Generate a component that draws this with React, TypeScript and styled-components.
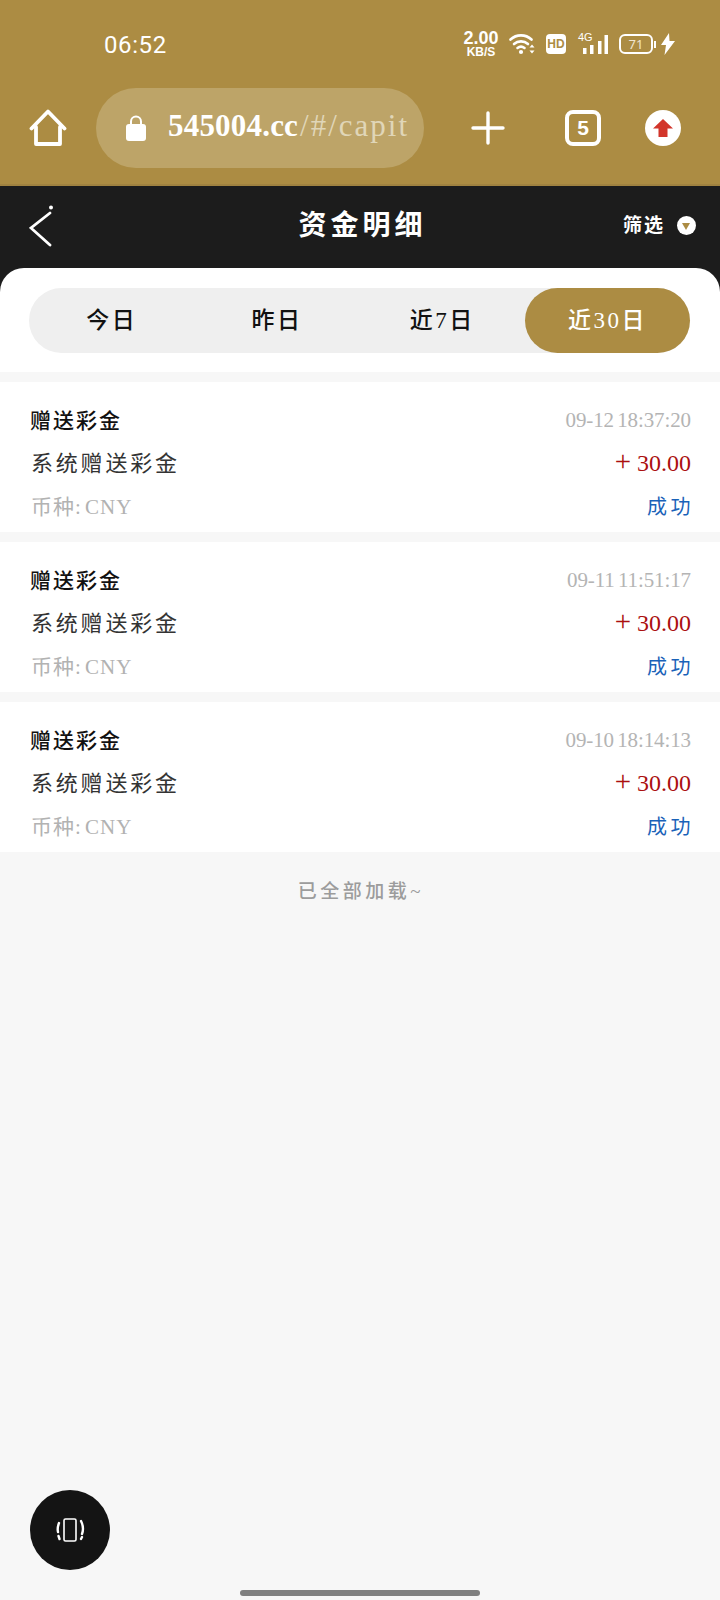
import { FC } from "react";
import styled, { createGlobalStyle } from "styled-components";

const GlobalStyle = createGlobalStyle`
  html, body {
    margin: 0;
    padding: 0;
    background: #f7f7f7;
  }
  * { box-sizing: border-box; }
`;

const serif = `"Liberation Serif", "Noto Sans CJK SC", serif`;
const gold = "#ac8c43";

interface Record {
  time: string;
}

const records: Record[] = [
  { time: "09-12 18:37:20" },
  { time: "09-11 11:51:17" },
  { time: "09-10 18:14:13" },
];

const tabs = ["今日", "昨日", "近7日", "近30日"];

const HomeIcon = () => (
  <svg width="38" height="38" viewBox="0 0 38 38" fill="none" stroke="#fff" strokeWidth="3.8" strokeLinejoin="round" strokeLinecap="round">
    <path d="M2.5 19.5 19 2.5l16.5 17" />
    <path d="M7 18v17h24V18" />
  </svg>
);

const LockIcon = () => (
  <svg width="22" height="28" viewBox="0 0 22 28" fill="none">
    <path d="M6 12V7.5a5 5 0 0 1 10 0V12" stroke="#fff" strokeWidth="2" />
    <rect x="1" y="10" width="20" height="17" rx="3" fill="#fff" />
  </svg>
);

const PlusIcon = () => (
  <svg width="34" height="34" viewBox="0 0 34 34" stroke="#fff" strokeWidth="3.4" strokeLinecap="round">
    <path d="M17 2v30M2 17h30" />
  </svg>
);

const UpdateIcon = () => (
  <svg width="36" height="36" viewBox="0 0 36 36">
    <circle cx="18" cy="18" r="18" fill="#fff" />
    <path d="M18 9 28 18.500h-5.500V27h-9v-8.500H8z" fill="#d2352b" />
  </svg>
);

const WifiIcon = () => (
  <svg width="26" height="22" viewBox="0 0 26 22" fill="none" stroke="#fff" strokeWidth="2.6" strokeLinecap="round">
    <path d="M1.500 6.500c6-5.500 15-5.500 21 0" />
    <path d="M5 11c4-3.500 10-3.500 14 0" />
    <path d="M8.500 15c2-1.500 5-1.500 7 0" />
    <circle cx="12" cy="19" r="2.100" fill="#fff" stroke="none" />
    <path d="M23 11.500l-2.500 3h5zM23 20.500l-2.500-3h5z" fill="#fff" stroke="none" />
  </svg>
);

const SignalIcon = () => (
  <svg width="28" height="20" viewBox="0 0 28 20" fill="#fff">
    <rect x="3" y="13" width="3.500" height="6" />
    <rect x="10" y="10" width="3.500" height="9" />
    <rect x="18" y="6" width="3.500" height="13" />
    <rect x="24.500" y="0" width="3.500" height="19" />
  </svg>
);

const BoltIcon = () => (
  <svg width="14" height="22" viewBox="0 0 14 22" fill="#fff">
    <path d="M8 0 0 12h5l-1.500 10L14 8H8.500z" />
  </svg>
);

const BackIcon = () => (
  <svg width="26" height="42" viewBox="0 0 26 42" fill="none" stroke="#fff" strokeWidth="2.800" strokeLinecap="round">
    <path d="M21 9 2 24l19 17" transform="translate(0 -1)" />
    <circle cx="22" cy="2.500" r="2" fill="#fff" stroke="none" />
  </svg>
);

const ShakeIcon = () => (
  <svg width="32" height="26" viewBox="0 0 32 26" fill="none" stroke="#fff" strokeWidth="1.600" strokeLinecap="round">
    <rect x="10" y="2" width="12" height="22" rx="1.500" />
    <path d="M5 6C3.500 10 3.500 13 4 15M5.500 22 4.500 19M27 4c2 4 2.500 9 1 13M27 22l1-2" strokeWidth="2.400" />
  </svg>
);

const App: FC = () => (
  <Page>
    <GlobalStyle />
    <BrowserHeader>
      <StatusBar>
        <Clock>06:52</Clock>
        <StatusIcons>
          <Speed>
            <SpeedValue>2.00</SpeedValue>
            <SpeedUnit>KB/S</SpeedUnit>
          </Speed>
          <WifiIcon />
          <HdBadge>HD</HdBadge>
          <Signal>
            <SignalLabel>4G</SignalLabel>
            <SignalIcon />
          </Signal>
          <Battery>
            <BatteryBody>71</BatteryBody>
            <BatteryCap />
            <BoltIcon />
          </Battery>
        </StatusIcons>
      </StatusBar>
      <Toolbar>
        <HomeIcon />
        <UrlPill>
          <LockIcon />
          <UrlText>
            545004.cc<UrlPath>/#/capital</UrlPath>
          </UrlText>
        </UrlPill>
        <ToolSlot $width={88}><PlusIcon /></ToolSlot>
        <ToolSlot $width={102}><TabCount>5</TabCount></ToolSlot>
        <ToolSlot $width={58}><UpdateIcon /></ToolSlot>
      </Toolbar>
    </BrowserHeader>

    <DarkSection>
      <NavBar>
        <BackSlot><BackIcon /></BackSlot>
        <NavTitle>资金明细</NavTitle>
        <FilterButton>
          <FilterLabel>筛选</FilterLabel>
          <FilterDot />
        </FilterButton>
      </NavBar>
      <TabPanel>
        <TabTrack>
          {tabs.map((tab, i) => (
            <TabItem key={tab} $active={i === 3}>{tab}</TabItem>
          ))}
        </TabTrack>
      </TabPanel>
    </DarkSection>

    <List>
      {records.map((record) => (
        <Card key={record.time}>
          <Row>
            <RecordType>赠送彩金</RecordType>
            <RecordTime>{record.time}</RecordTime>
          </Row>
          <Row>
            <RecordDesc>系统赠送彩金</RecordDesc>
            <Amount><AmountSign>+</AmountSign>30.00</Amount>
          </Row>
          <Row>
            <Currency>币种: CNY</Currency>
            <Status>成功</Status>
          </Row>
        </Card>
      ))}
    </List>
    <EndNote>已全部加载~</EndNote>

    <FloatButton><ShakeIcon /></FloatButton>
    <HomeBar />
  </Page>
);

const Page = styled.div`
  position: relative;
  width: 720px;
  height: 1600px;
  overflow: hidden;
  background: #f7f7f7;
  font-family: ${serif};
`;

const BrowserHeader = styled.header`
  height: 186px;
  background: ${gold};
  border-bottom: 2px solid #a08240;
`;

const StatusBar = styled.div`
  height: 88px;
  padding: 0 45px 0 104px;
  display: flex;
  align-items: center;
  justify-content: space-between;
  color: #fff;
`;

const Clock = styled.span`
  margin-top: 2px;
  font-family: Roboto, sans-serif;
  font-size: 24px;
  letter-spacing: 0.6px;
`;

const StatusIcons = styled.div`
  display: flex;
  align-items: center;
  gap: 11px;
`;

const Speed = styled.div`
  width: 34px;
  display: flex;
  flex-direction: column;
  align-items: center;
  font-family: "Liberation Sans", sans-serif;
  font-weight: 700;
`;

const SpeedValue = styled.span`
  font-size: 18px;
  line-height: 17px;
`;

const SpeedUnit = styled.span`
  font-size: 12px;
  line-height: 11px;
`;

const HdBadge = styled.span`
  width: 20px;
  height: 20px;
  border-radius: 4px;
  background: #fff;
  color: ${gold};
  font-family: "Liberation Sans", sans-serif;
  font-size: 12px;
  font-weight: 700;
  display: flex;
  align-items: center;
  justify-content: center;
`;

const Signal = styled.div`
  position: relative;
  width: 30px;
  height: 22px;
  margin-left: 1px;
  display: flex;
  justify-content: flex-end;
  align-items: flex-end;
`;

const SignalLabel = styled.span`
  position: absolute;
  left: 0;
  top: -1px;
  font-family: "Liberation Sans", sans-serif;
  font-size: 11px;
  line-height: 11px;
`;

const Battery = styled.div`
  display: flex;
  align-items: center;
`;

const BatteryBody = styled.span`
  width: 34px;
  height: 20px;
  border: 2px solid #fff;
  border-radius: 6px;
  font-family: "Noto Sans", sans-serif;
  font-size: 13px;
  line-height: 16px;
  text-align: center;
  color: #f0e6cf;
`;

const BatteryCap = styled.span`
  width: 2px;
  height: 7px;
  margin: 0 5px 0 1px;
  background: #fff;
`;

const Toolbar = styled.div`
  height: 80px;
  padding: 0 0 0 29px;
  display: flex;
  align-items: center;
`;

const UrlPill = styled.div`
  width: 328px;
  height: 80px;
  margin-left: 29px;
  margin-right: 20px;
  padding: 0 15px 0 29px;
  border-radius: 40px;
  background: #bda468;
  display: flex;
  align-items: center;
  gap: 21px;
`;

const UrlText = styled.div`
  flex: 1;
  margin-top: -5px;
  overflow: hidden;
  white-space: nowrap;
  font-size: 31px;
  font-weight: 700;
  letter-spacing: 0.2px;
  color: #fff;
`;

const UrlPath = styled.span`
  margin-left: 2px;
  font-weight: 400;
  letter-spacing: 2px;
  color: #e0d6b8;
`;

const ToolSlot = styled.div<{ $width: number }>`
  width: ${({ $width }) => $width}px;
  display: flex;
  justify-content: center;
`;

const TabCount = styled.span`
  width: 36px;
  height: 36px;
  border: 4px solid #fff;
  border-radius: 8px;
  color: #fff;
  font-family: "Liberation Sans", sans-serif;
  font-size: 21px;
  font-weight: 700;
  display: flex;
  align-items: center;
  justify-content: center;
`;

const DarkSection = styled.section`
  background: #1c1c1c;
`;

const NavBar = styled.nav`
  height: 82px;
  padding: 0 24px 0 29px;
  display: flex;
  align-items: center;
  justify-content: space-between;
  color: #fff;
`;

const BackSlot = styled.div`
  width: 110px;
  margin-top: 2px;
`;

const NavTitle = styled.h1`
  margin: 0 0 8px;
  font-size: 28px;
  font-weight: 700;
  letter-spacing: 4px;
`;

const FilterButton = styled.div`
  width: 110px;
  display: flex;
  align-items: center;
  justify-content: flex-end;
  gap: 12px;
`;

const FilterLabel = styled.span`
  margin-top: -7px;
  font-size: 19px;
  font-weight: 700;
  letter-spacing: 2px;
`;

const FilterDot = styled.span`
  position: relative;
  width: 19px;
  height: 19px;
  margin-top: -3px;
  border-radius: 50%;
  background: #fff;

  &::after {
    content: "";
    position: absolute;
    left: 5px;
    top: 7px;
    border-left: 4.500px solid transparent;
    border-right: 4.500px solid transparent;
    border-top: 7px solid ${gold};
  }
`;

const TabPanel = styled.div`
  height: 104px;
  padding: 20px 30px 0 29px;
  border-radius: 24px 24px 0 0;
  background: #fff;
`;

const TabTrack = styled.div`
  height: 65px;
  border-radius: 33px;
  background: #efefef;
  display: grid;
  grid-template-columns: repeat(4, 1fr);
`;

const TabItem = styled.div<{ $active: boolean }>`
  padding-bottom: 6px;
  border-radius: 33px;
  display: flex;
  align-items: center;
  justify-content: center;
  background: ${({ $active }) => ($active ? gold : "transparent")};
  color: ${({ $active }) => ($active ? "#fff" : "#111")};
  font-size: 23px;
  font-weight: 500;
  letter-spacing: 2.500px;
`;

const List = styled.div`
  padding-top: 10px;
  display: flex;
  flex-direction: column;
  gap: 10px;
`;

const Card = styled.article`
  height: 150px;
  padding: 23px 29px 12px 30px;
  background: #fff;
  display: flex;
  flex-direction: column;
  justify-content: space-between;
`;

const Row = styled.div`
  height: 30px;
  display: flex;
  align-items: center;
  justify-content: space-between;
`;

const RecordType = styled.span`
  margin-top: -3px;
  font-size: 21px;
  font-weight: 500;
  letter-spacing: 2px;
  color: #111;
`;

const RecordTime = styled.span`
  font-size: 21px;
  word-spacing: -2px;
  letter-spacing: -0.1px;
  color: #b4b4b4;
`;

const RecordDesc = styled.span`
  margin: -3px 0 0 1px;
  font-size: 22px;
  letter-spacing: 2.800px;
  color: #333;
`;

const Amount = styled.span`
  margin-top: -2px;
  font-size: 24px;
  color: #ab1010;
`;

const AmountSign = styled.span`
  margin-right: 6px;
  font-size: 29px;
  line-height: 1;
`;

const Currency = styled.span`
  margin-left: 1px;
  font-size: 21px;
  letter-spacing: 1px;
  word-spacing: -3px;
  color: #b2b2b2;
`;

const Status = styled.span`
  font-size: 20px;
  letter-spacing: 3.500px;
  margin-right: -3px;
  color: #1a62b8;
`;

const EndNote = styled.div`
  margin: 24px 0 0 2px;
  text-align: center;
  font-size: 19px;
  font-weight: 500;
  letter-spacing: 3.500px;
  color: #9c9c9c;
`;

const FloatButton = styled.div`
  position: absolute;
  left: 30px;
  bottom: 30px;
  width: 80px;
  height: 80px;
  border-radius: 50%;
  background: #141414;
  display: flex;
  align-items: center;
  justify-content: center;
`;

const HomeBar = styled.div`
  position: absolute;
  left: 240px;
  bottom: 4px;
  width: 240px;
  height: 6px;
  border-radius: 3px;
  background: #808080;
`;

export default App;
